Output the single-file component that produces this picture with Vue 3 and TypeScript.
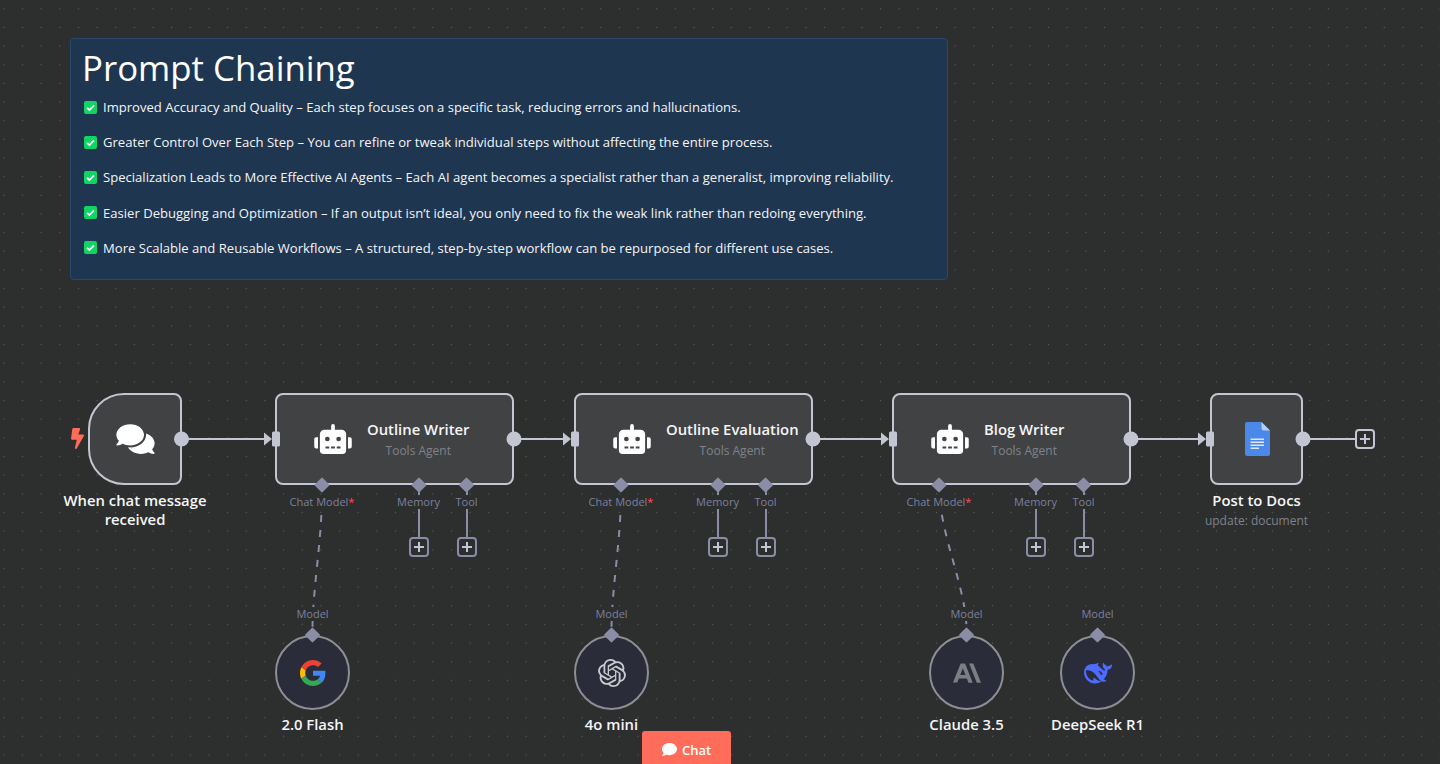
<template>
  <div class="canvas">
    <section class="note">
      <h1>Prompt Chaining</h1>
      <ul>
        <li v-for="line in benefits" :key="line">
          <svg class="check" viewBox="0 0 13 13">
            <rect width="13" height="13" rx="2" fill="#10d564" />
            <path d="M3 6.8 5.4 9 10 4.4" fill="none" stroke="#fff" stroke-width="1.7" />
          </svg>
          <span>{{ line }}</span>
        </li>
      </ul>
    </section>

    <!-- workflow nodes -->
    <div class="node trigger" :style="at(88, 393)">
      <svg class="chat-icon" viewBox="0 0 576 512">
        <path fill="#fff" d="M416 192c0-88.4-93.1-160-208-160S0 103.6 0 192c0 34.3 14.1 65.9 38 92-13.4 30.2-35.5 54.2-35.8 54.5-2.2 2.3-2.8 5.7-1.5 8.7S4.8 352 8 352c36.6 0 66.9-12.3 88.7-25 32.2 15.7 70.3 25 111.3 25 114.9 0 208-71.6 208-160zm122 220c23.9-26 38-57.7 38-92 0-66.9-53.5-124.2-129.3-148.1.9 6.6 1.3 13.3 1.3 20.1 0 105.9-107.7 192-240 192-10.8 0-21.3-.8-31.7-1.9C207.8 439.6 281.8 480 368 480c41 0 79.1-9.2 111.3-25 21.8 12.7 52.1 25 88.7 25 3.2 0 6.1-1.9 7.3-4.8 1.3-2.9.7-6.3-1.5-8.7-.3-.3-22.4-24.2-35.8-54.5z" />
      </svg>
    </div>
    <svg class="bolt" viewBox="0 0 320 512">
      <path fill="#ff6d5a" d="M296 160H180.6l42.6-129.8C227.2 15 215.7 0 200 0H56C44 0 33.8 8.9 32.2 20.8l-32 240C-1.7 275.2 9.5 288 24 288h118.7L96.6 482.5c-3.6 15.2 8 29.5 23.3 29.5 8.4 0 16.4-4.4 20.8-12l176-304c9.3-15.9-2.2-36-20.7-36z" />
    </svg>
    <div class="node-label" :style="centered(135, 491)">When chat message<br />received</div>

    <div v-for="agent in agents" :key="agent.title" class="node agent" :style="at(agent.x, 393)">
      <svg class="robot" viewBox="0 0 640 512">
        <path fill="#fff" d="M32,224H64V416H32A31.96166,31.96166,0,0,1,0,384V256A31.96166,31.96166,0,0,1,32,224Zm512-48V448a64.06328,64.06328,0,0,1-64,64H160a64.06328,64.06328,0,0,1-64-64V176a79.974,79.974,0,0,1,80-80H288V32a32,32,0,0,1,64,0V96H464A79.974,79.974,0,0,1,544,176ZM264,256a40,40,0,1,0-40,40A39.997,39.997,0,0,0,264,256Zm-8,128H192v32h64Zm96,0H288v32h64ZM456,256a40,40,0,1,0-40,40A39.997,39.997,0,0,0,456,256Zm-8,128H384v32h64ZM640,256V384a31.96166,31.96166,0,0,1-32,32H576V224h32A31.96166,31.96166,0,0,1,640,256Z" />
      </svg>
      <div class="agent-text">
        <div class="agent-title">{{ agent.title }}</div>
        <div class="agent-sub">Tools Agent</div>
      </div>
    </div>

    <div class="node docs" :style="at(1210, 393)">
      <svg class="docs-icon" viewBox="0 0 25 34">
        <path fill="#4a88ea" d="M2 0h14.5L25 8.500V32a2 2 0 0 1-2 2H2a2 2 0 0 1-2-2V2a2 2 0 0 1 2-2z" />
        <path fill="#b3cefb" d="M16.500 0 25 8.500h-6.500a2 2 0 0 1-2-2z" />
        <path fill="#f1f1f1" opacity=".9" d="M5.500 16.500h13.500v1.600H5.500zM5.500 19.500h13.500v1.600H5.500zM5.500 22.500h13.500v1.600H5.500zM5.500 25.500h8.500v1.600H5.500z" />
      </svg>
    </div>
    <div class="node-label" :style="centered(1256.5, 491)">Post to Docs</div>
    <div class="node-sub" :style="centered(1256.5, 513)">update: document</div>

    <!-- edges and ports -->
    <svg class="edges" width="1440" height="764">
      <path v-for="e in mainEdges" :key="e[0]" :d="`M${e[0]} 439H${e[1]}`" class="main-line" />
      <path d="M1303 439H1356" class="main-line" />
      <path v-for="l in dashed" :key="l" :d="l" class="dash-line" />
      <path v-for="p in plusPorts" :key="p" :d="`M${p} 485V538`" class="sub-line" />
      <g v-for="x in inputs" :key="x" fill="#c3c6d2">
        <path :d="`M${x - 8} 432.500 ${x} 439 ${x - 8} 445.500z`" />
        <rect :x="x" y="431.500" width="8" height="15" rx="1.500" />
      </g>
      <circle v-for="x in outputs" :key="x" :cx="x" cy="439" r="7.500" fill="#c3c6d2" />
    </svg>

    <template v-for="agent in agents" :key="agent.title">
      <div class="port-label" :style="centered(agent.x + 47, 495)">Chat Model<em>*</em></div>
      <div class="port-label" :style="centered(agent.x + 143.5, 495)">Memory</div>
      <div class="port-label" :style="centered(agent.x + 191.5, 495)">Tool</div>
      <button class="plus" :style="at(agent.x + 134, 537)"></button>
      <button class="plus" :style="at(agent.x + 182, 537)"></button>
    </template>
    <button class="plus light" :style="at(1355, 429)"></button>

    <template v-for="model in models" :key="model.name">
      <div class="port-label" :style="centered(model.x, 607)">Model</div>
      <div class="model" :style="at(model.x - 37.5, 635)">
        <svg v-if="model.icon === 'google'" class="m-google" viewBox="0 0 48 48">
          <path fill="#EA4335" d="M24 9.500c3.540 0 6.710 1.220 9.210 3.600l6.850-6.850C35.900 2.380 30.470 0 24 0 14.620 0 6.510 5.380 2.560 13.220l7.980 6.190C12.430 13.720 17.740 9.500 24 9.500z" />
          <path fill="#4285F4" d="M46.980 24.550c0-1.570-.15-3.090-.38-4.550H24v9.020h12.940c-.58 2.960-2.260 5.480-4.780 7.180l7.730 6c4.510-4.180 7.090-10.360 7.090-17.650z" />
          <path fill="#FBBC05" d="M10.530 28.590c-.48-1.450-.76-2.990-.76-4.590s.27-3.140.76-4.590l-7.980-6.190C.92 16.460 0 20.120 0 24c0 3.880.92 7.540 2.560 10.780l7.970-6.190z" />
          <path fill="#34A853" d="M24 48c6.480 0 11.930-2.130 15.890-5.810l-7.730-6c-2.150 1.450-4.920 2.300-8.160 2.300-6.260 0-11.570-4.220-13.470-9.910l-7.980 6.190C6.510 42.620 14.620 48 24 48z" />
        </svg>
        <svg v-else-if="model.icon === 'openai'" class="m-openai" viewBox="0 0 24 24">
          <path fill="#c9cad0" d="M22.2819 9.8211a5.9847 5.9847 0 0 0-.5157-4.9108 6.0462 6.0462 0 0 0-6.5098-2.9A6.0651 6.0651 0 0 0 4.9807 4.1818a5.9847 5.9847 0 0 0-3.9977 2.9 6.0462 6.0462 0 0 0 .7427 7.0966 5.98 5.98 0 0 0 .511 4.9107 6.051 6.051 0 0 0 6.5146 2.9001A5.9847 5.9847 0 0 0 13.2599 24a6.0557 6.0557 0 0 0 5.7718-4.2058 5.9894 5.9894 0 0 0 3.9977-2.9001 6.0557 6.0557 0 0 0-.7475-7.0729zm-9.022 12.6081a4.4755 4.4755 0 0 1-2.8764-1.0408l.1419-.0804 4.7783-2.7582a.7948.7948 0 0 0 .3927-.6813v-6.7369l2.02 1.1686a.071.071 0 0 1 .038.052v5.5826a4.504 4.504 0 0 1-4.4945 4.4944zm-9.6607-4.1254a4.4708 4.4708 0 0 1-.5346-3.0137l.142.0852 4.783 2.7582a.7712.7712 0 0 0 .7806 0l5.8428-3.3685v2.3324a.0804.0804 0 0 1-.0332.0615L9.74 19.9502a4.4992 4.4992 0 0 1-6.1408-1.6464zM2.3408 7.8956a4.485 4.485 0 0 1 2.3655-1.9728V11.6a.7664.7664 0 0 0 .3879.6765l5.8144 3.3543-2.0201 1.1685a.0757.0757 0 0 1-.071 0l-4.8303-2.7865A4.504 4.504 0 0 1 2.3408 7.872zm16.5963 3.8558L13.1038 8.364 15.1192 7.2a.0757.0757 0 0 1 .071 0l4.8303 2.7913a4.4944 4.4944 0 0 1-.6765 8.1042v-5.6772a.79.79 0 0 0-.407-.667zm2.0107-3.0231l-.142-.0852-4.7735-2.7818a.7759.7759 0 0 0-.7854 0L9.409 9.2297V6.8974a.0662.0662 0 0 1 .0284-.0615l4.8303-2.7866a4.4992 4.4992 0 0 1 6.6802 4.66zM8.3065 12.863l-2.02-1.1638a.0804.0804 0 0 1-.038-.0567V6.0742a4.4992 4.4992 0 0 1 7.3757-3.4537l-.142.0805L8.704 5.459a.7948.7948 0 0 0-.3927.6813zm1.0976-2.3654l2.602-1.4998 2.6069 1.4998v2.9994l-2.5974 1.4997-2.6067-1.4997Z" />
        </svg>
        <svg v-else-if="model.icon === 'anthropic'" class="m-anthropic" viewBox="0 3.500 24 16.500">
          <path fill="#7d7d84" d="M13.827 3.520h3.603L24 20h-3.603l-6.570-16.480zm-7.258 0h3.767L16.906 20h-3.674l-1.343-3.461H5.017l-1.344 3.460H0L6.570 3.522zm4.132 9.959L8.453 7.687 6.205 13.480H10.700z" />
        </svg>
        <svg v-else class="m-deepseek" viewBox="0 2.500 24 18.500">
          <path fill="#4d6bfe" d="M23.748 4.482c-.254-.124-.364.113-.512.234-.051.039-.094.09-.137.136-.372.397-.806.657-1.373.626-.829-.046-1.537.214-2.163.848-.133-.782-.575-1.248-1.247-1.548-.352-.156-.708-.311-.955-.65-.172-.241-.219-.51-.305-.774-.055-.16-.11-.323-.293-.35-.2-.031-.278.136-.356.276-.313.572-.434 1.202-.422 1.84.027 1.436.633 2.58 1.838 3.393.137.093.172.187.129.323-.082.28-.18.552-.266.833-.055.179-.137.217-.329.14a5.526 5.526 0 01-1.736-1.18c-.857-.828-1.631-1.742-2.597-2.458a11.365 11.365 0 00-.689-.471c-.985-.957.13-1.743.388-1.836.27-.098.093-.432-.779-.428-.872.004-1.67.295-2.687.684a3.055 3.055 0 01-.465.137 9.597 9.597 0 00-2.883-.102c-1.885.21-3.39 1.102-4.497 2.623C.082 8.606-.231 10.684.152 12.85c.403 2.284 1.569 4.175 3.36 5.653 1.858 1.533 3.997 2.284 6.438 2.14 1.482-.085 3.133-.284 4.994-1.86.47.234.962.327 1.78.397.63.059 1.236-.03 1.705-.128.735-.156.684-.837.419-.961-2.155-1.004-1.682-.595-2.113-.926 1.096-1.296 2.746-2.642 3.392-7.003.05-.347.007-.565 0-.845-.004-.17.035-.237.23-.256a4.173 4.173 0 001.545-.475c1.396-.763 1.96-2.015 2.093-3.517.02-.23-.004-.467-.247-.588zM11.581 18c-2.089-1.642-3.102-2.183-3.52-2.16-.392.024-.321.471-.235.763.09.288.207.486.371.739.114.167.192.416-.113.603-.673.416-1.842-.14-1.897-.167-1.361-.802-2.5-1.86-3.301-3.307-.774-1.393-1.224-2.887-1.298-4.482-.02-.386.093-.522.477-.592a4.696 4.696 0 011.529-.039c2.132.312 3.946 1.265 5.468 2.774.868.86 1.525 1.887 2.202 2.891.72 1.066 1.494 2.082 2.48 2.914.348.292.625.514.891.677-.802.09-2.14.11-3.054-.614zm1-6.44a.306.306 0 01.415-.287.302.302 0 01.2.288.306.306 0 01-.31.307.303.303 0 01-.305-.308zm3.11 1.596c-.2.081-.399.151-.59.16a1.245 1.245 0 01-.798-.254c-.274-.23-.47-.358-.552-.758a1.73 1.73 0 01.016-.588c.07-.327-.008-.537-.239-.727-.187-.156-.426-.199-.688-.199a.559.559 0 01-.254-.078c-.11-.054-.2-.19-.114-.358.028-.054.16-.186.192-.21.356-.202.767-.136 1.146.016.352.144.618.408 1.001.782.391.451.462.576.685.914.176.265.336.537.445.848.067.195-.019.354-.25.452z" />
        </svg>
      </div>
      <div class="node-label" :style="centered(model.x, 715)">{{ model.name }}</div>
    </template>

    <!-- port diamonds sit above circles and nodes -->
    <svg class="edges" width="1440" height="764">
      <rect
        v-for="d in diamonds"
        :key="`${d.x}-${d.y}`"
        :x="d.x - 5.5"
        :y="d.y - 5.5"
        width="11"
        height="11"
        rx="1"
        fill="#8a8da5"
        :transform="`rotate(45 ${d.x} ${d.y})`"
      />
    </svg>

    <button class="chat-btn">
      <svg viewBox="0 0 512 512">
        <path fill="#fff" d="M256 32C114.600 32 0 125.100 0 240c0 49.600 21.400 95 57 130.700C44.500 421.100 2.700 466 2.200 466.500c-2.200 2.300-2.800 5.700-1.500 8.700S4.800 480 8 480c66.300 0 116-31.800 140.600-51.400 32.700 12.300 69 19.400 107.400 19.400 141.400 0 256-93.100 256-208S397.400 32 256 32z" />
      </svg>
      Chat
    </button>
  </div>
</template>

<script setup lang="ts">
interface Agent {
  title: string;
  x: number;
}

interface Model {
  name: string;
  x: number;
  icon: string;
}

const benefits: string[] = [
  "Improved Accuracy and Quality – Each step focuses on a specific task, reducing errors and hallucinations.",
  "Greater Control Over Each Step – You can refine or tweak individual steps without affecting the entire process.",
  "Specialization Leads to More Effective AI Agents – Each AI agent becomes a specialist rather than a generalist, improving reliability.",
  "Easier Debugging and Optimization – If an output isn’t ideal, you only need to fix the weak link rather than redoing everything.",
  "More Scalable and Reusable Workflows – A structured, step-by-step workflow can be repurposed for different use cases.",
];

const agents: Agent[] = [
  { title: "Outline Writer", x: 275 },
  { title: "Outline Evaluation", x: 574 },
  { title: "Blog Writer", x: 892 },
];

const models: Model[] = [
  { name: "2.0 Flash", x: 312.5, icon: "google" },
  { name: "4o mini", x: 611.5, icon: "openai" },
  { name: "Claude 3.5", x: 966.5, icon: "anthropic" },
  { name: "DeepSeek R1", x: 1097.5, icon: "deepseek" },
];

const mainEdges: number[][] = [
  [182, 266],
  [514, 565],
  [813, 883],
  [1131, 1200],
];
const inputs = [272, 571, 889, 1206];
const outputs = [181.5, 514, 813, 1131, 1303];

const plusPorts = agents.flatMap((a) => [a.x + 144, a.x + 192]);

const dashed: string[] = [
  "M322 492C322 540 312.500 590 312.500 630",
  "M621 492C621 540 611.500 590 611.500 630",
  "M939 492C942 540 966.500 590 966.500 630",
];

const diamonds = [
  ...agents.flatMap((a) => [
    { x: a.x + 47, y: 485 },
    { x: a.x + 144, y: 485 },
    { x: a.x + 191.5, y: 485 },
  ]),
  ...models.map((m) => ({ x: m.x, y: 635 })),
];

const at = (x: number, y: number) => ({ left: `${x}px`, top: `${y}px` });
const centered = (x: number, y: number) => ({
  left: `${x}px`,
  top: `${y}px`,
  transform: "translateX(-50%)",
});
</script>

<style>
html,
body {
  margin: 0;
  overflow: hidden;
  background: #2d2e2e;
}
</style>

<style scoped>
.canvas {
  position: relative;
  width: 1440px;
  height: 764px;
  overflow: hidden;
  font-family: "Open Sans", sans-serif;
  background-color: #2d2e2e;
  background-image: radial-gradient(circle at center, #5c5d5d 0.8px, transparent 1px);
  background-size: 18.667px 18.667px;
  background-position: -5.6px -0.6px;
}

.note {
  position: absolute;
  left: 70px;
  top: 38px;
  width: 878px;
  height: 242px;
  box-sizing: border-box;
  padding: 6px 11px 0;
  background: #1f3650;
  border: 1px solid #27496b;
  border-radius: 4px;
  color: #fff;
}

.note h1 {
  margin: 0;
  font-size: 34.8px;
  line-height: 46px;
  font-weight: 500;
}

.note ul {
  list-style: none;
  margin: 7px 0 0;
  padding: 0 0 0 2px;
}

.note li {
  display: flex;
  align-items: center;
  gap: 6px;
  height: 18px;
  margin-bottom: 17.2px;
  font-size: 13.08px;
  line-height: 18px;
  color: #f4f5f7;
}

.check {
  width: 13px;
  height: 13px;
  flex: none;
}

.node {
  position: absolute;
  box-sizing: border-box;
  height: 92px;
  display: flex;
  align-items: center;
  background: #414244;
  border: 2px solid #c3c6d2;
  border-radius: 8px;
}

.trigger {
  width: 94px;
  justify-content: center;
  border-radius: 36px 8px 8px 36px;
}

.chat-icon {
  width: 39px;
  height: 34px;
  margin-top: -1px;
}

.bolt {
  position: absolute;
  left: 70.5px;
  top: 428px;
  width: 13px;
  height: 21px;
}

.agent {
  width: 239px;
  padding-left: 37px;
  gap: 15px;
}

.robot {
  width: 38px;
  height: 30px;
  flex: none;
}

.agent-text {
  text-align: center;
  white-space: nowrap;
}

.agent-title {
  font-size: 14.85px;
  line-height: 19px;
  font-weight: 600;
  color: #f4f5f7;
}

.agent-sub {
  font-size: 12px;
  line-height: 16px;
  margin-top: 4px;
  color: #7f828b;
}

.docs {
  width: 93px;
  justify-content: center;
}

.docs-icon {
  width: 25px;
  height: 34px;
  margin-left: 1px;
}

.node-label {
  position: absolute;
  font-size: 14.85px;
  line-height: 19px;
  font-weight: 600;
  color: #f4f5f7;
  white-space: nowrap;
  text-align: center;
}

.node-sub {
  position: absolute;
  font-size: 12px;
  line-height: 16px;
  color: #7f828b;
  white-space: nowrap;
}

.edges {
  position: absolute;
  left: 0;
  top: 0;
  pointer-events: none;
}

.main-line {
  fill: none;
  stroke: #c3c6d2;
  stroke-width: 2;
}

.dash-line {
  fill: none;
  stroke: #8a8da5;
  stroke-width: 2;
  stroke-dasharray: 7 8;
  stroke-dashoffset: 7;
}

.sub-line {
  fill: none;
  stroke: #8a8da5;
  stroke-width: 2;
}

.port-label {
  position: absolute;
  font-size: 11px;
  line-height: 14px;
  color: #7d80a0;
  white-space: nowrap;
  background: #2d2e2e;
}

.port-label em {
  font-style: normal;
  color: #ff4d5a;
}

.plus {
  position: absolute;
  box-sizing: border-box;
  width: 20px;
  height: 20px;
  padding: 0;
  background: #2d2e2e;
  border: 2px solid #8a8da5;
  border-radius: 4px;
}

.plus::before,
.plus::after {
  content: "";
  position: absolute;
  left: 50%;
  top: 50%;
  background: #c3c6d2;
  transform: translate(-50%, -50%);
}

.plus::before {
  width: 10px;
  height: 2px;
}

.plus::after {
  width: 2px;
  height: 10px;
}

.plus.light {
  border-color: #c3c6d2;
}

.model {
  position: absolute;
  box-sizing: border-box;
  width: 75px;
  height: 75px;
  display: flex;
  align-items: center;
  justify-content: center;
  border: 2px solid #8e8e94;
  border-radius: 50%;
  background: #2a2c3a;
}

.m-google {
  width: 26px;
  height: 26px;
}

.m-openai {
  width: 28px;
  height: 28px;
}

.m-anthropic {
  width: 28px;
  height: 20px;
}

.m-deepseek {
  width: 28px;
  height: 22px;
}

.chat-btn {
  position: absolute;
  left: 642px;
  top: 731px;
  width: 89px;
  height: 33px;
  display: flex;
  align-items: center;
  justify-content: center;
  gap: 5px;
  padding: 4px 0 0;
  border: none;
  border-radius: 3px 3px 0 0;
  background: #ff6d5a;
  color: #fff;
  font-family: "Open Sans", sans-serif;
  font-size: 13px;
  font-weight: 600;
}

.chat-btn svg {
  width: 15px;
  height: 15px;
}
</style>
